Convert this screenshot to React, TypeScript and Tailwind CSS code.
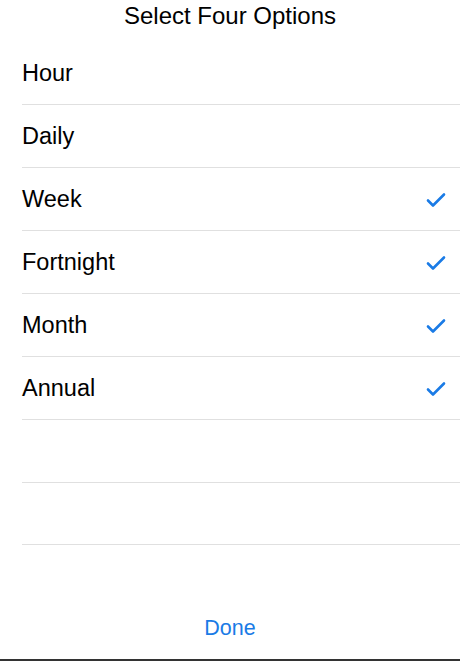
import React from "react";

const options = [
  { label: "Hour", checked: false },
  { label: "Daily", checked: false },
  { label: "Week", checked: true },
  { label: "Fortnight", checked: true },
  { label: "Month", checked: true },
  { label: "Annual", checked: true },
];

const Check = () => (
  <svg width="20" height="16" viewBox="0 0 20 16" fill="none" className="text-[#1a7be6]">
    <path d="M2 8.5l5 5L18 2.5" stroke="currentColor" strokeWidth={2.6} strokeLinecap="round" strokeLinejoin="round" />
  </svg>
);

export default function App() {
  return (
    <div className="w-[460px] h-[661px] bg-white flex flex-col font-['Liberation_Sans',Arial,sans-serif] text-black overflow-hidden">
      <div className="h-[42px] flex items-start justify-center pt-[1px]">
        <h1 className="text-[24px] leading-[30px]">Select Four Options</h1>
      </div>

      <ul className="pl-[22px]">
        {options.map((o) => (
          <li key={o.label} className="h-[63px] border-b border-[#e0e0e0] flex items-center justify-between pr-[14px] pt-[2px]">
            <span className="text-[23.5px]">{o.label}</span>
            {o.checked && <Check />}
          </li>
        ))}
        <li className="h-[63px] border-b border-[#e0e0e0]" />
        <li className="h-[62px] border-b border-[#e0e0e0]" />
      </ul>

      <div className="flex-1 flex items-center justify-center pt-[52px]">
        <button className="text-[21.5px] text-[#1a7be6]">Done</button>
      </div>
      <div className="h-[2px] bg-[#333]" />
    </div>
  );
}
